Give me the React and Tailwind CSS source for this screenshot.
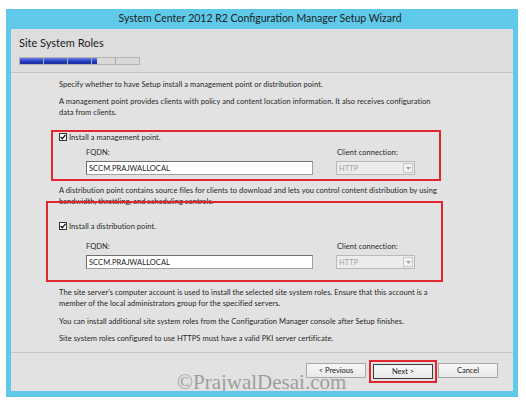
import React from 'react';

const FONT = { fontFamily: 'Lato, "Noto Sans", sans-serif' };

function Check() {
  return (
    <span className="w-[8px] h-[8px] bg-white border border-[#333] flex items-center justify-center shrink-0">
      <svg width="6" height="6" viewBox="0 0 6 6">
        <path d="M0.6 3 L2.3 4.8 L5.4 0.8" fill="none" stroke="#111" strokeWidth="1.3" />
      </svg>
    </span>
  );
}

function TextInput({ value }) {
  return (
    <div className="w-[227px] h-[14px] bg-white border border-[#a0a0a0] border-t-[#6f6f6f] border-l-[#6f6f6f] flex items-center pl-[2px] text-[7.5px] text-[#222]">
      {value}
    </div>
  );
}

function DisabledSelect() {
  return (
    <div className="w-[79px] h-[14px] bg-[#ececec] border border-[#b9b9b9] flex items-center pl-[2px] text-[7.5px] text-[#a3a3a3]">
      <span className="flex-1">HTTP</span>
      <span className="w-[10px] h-[10px] mr-[1px] border border-[#c8c8c8] bg-[#f2f2f2] flex items-center justify-center">
        <svg width="5" height="3" viewBox="0 0 5 3"><path d="M0 0 L5 0 L2.5 3 Z" fill="#a8a8a8" /></svg>
      </span>
    </div>
  );
}

function RoleFields() {
  return (
    <div className="flex">
      <div className="flex flex-col">
        <div className="h-[11px] leading-[11px] text-[7.5px]">FQDN:</div>
        <div className="mt-[3px]"><TextInput value="SCCM.PRAJWALLOCAL" /></div>
      </div>
      <div className="flex flex-col ml-[23px]">
        <div className="h-[11px] leading-[11px] text-[7.5px] pl-[1px]">Client connection:</div>
        <div className="mt-[3px]"><DisabledSelect /></div>
      </div>
    </div>
  );
}

function Btn({ children, focused }) {
  return (
    <div
      className={`w-[60px] h-[15px] flex items-center justify-center text-[7.5px] text-[#222] bg-gradient-to-b from-[#f7f7f7] to-[#e9e9e9] border ${
        focused ? 'border-[#3c3c3c]' : 'border-[#a9a9a9]'
      }`}
    >
      {children}
    </div>
  );
}

export default function App() {
  const segs = ['w-full', 'w-full', 'w-full', 'w-[5px]', 'w-0'];
  return (
    <div className="w-[526px] h-[402px] bg-white pt-[9px] pl-[6px]" style={FONT}>
      <div className="w-[512px] h-[388px] bg-[#5ec9e9] flex flex-col px-[5px] pb-[6px]">
        {/* title bar */}
        <div className="h-[20px] flex items-center justify-center text-[10.5px] text-[#1e1e1e] pr-[4px]">
          System Center 2012 R2 Configuration Manager Setup Wizard
        </div>

        <div className="flex-1 flex flex-col bg-[#e2e2e2] text-[#262626] relative overflow-hidden">
          {/* header */}
          <div className="h-[44px] bg-[#dddddd] border-b border-[#c4c4c4] pl-[8px] pt-[7px]">
            <div className="text-[11px] leading-[14px] text-[#1a1a1a]">Site System Roles</div>
            <div className="mt-[7px] w-[121px] h-[8px] border border-[#b3b3b3] bg-[#d8d8d8] flex">
              {segs.map((w, i) => (
                <div key={i} className={`flex-1 h-full ${i < 4 ? 'border-r border-[#a9a9a9]' : ''}`}>
                  <div className={`${w} h-full bg-gradient-to-b from-[#6d7fe6] via-[#2a3fc4] to-[#1a2a9a]`} />
                </div>
              ))}
            </div>
          </div>

          {/* content */}
          <div className="flex-1 flex flex-col pt-[6px] text-[7.5px] leading-[11px] whitespace-nowrap tracking-[0.05px]">
            <div className="pl-[48px]">Specify whether to have Setup install a management point or distribution point.</div>
            <div className="pl-[48px] mt-[6px]">
              <div>A management point provides clients with policy and content location information. It also receives configuration</div>
              <div>data from clients.</div>
            </div>

            <div className="ml-[40px] mt-[12px] w-[390px] border-2 border-[#e1262d] pl-[6px] pb-[4px]">
              <div className="h-[10px] flex items-center gap-[2px]">
                <Check />
                <span>Install a management point.</span>
              </div>
              <div className="mt-[5px] pl-[27px]"><RoleFields /></div>
            </div>

            <div className="pl-[48px] mt-[4px]">
              <div>A distribution point contains source files for clients to download and lets you control content distribution by using</div>
              <div>bandwidth, throttling, and scheduling controls.</div>
            </div>

            <div className="ml-[35px] -mt-[6px] w-[397px] border-2 border-[#e1262d] pl-[11px] pt-[18px] pb-[11px]">
              <div className="h-[10px] flex items-center gap-[2px]">
                <Check />
                <span>Install a distribution point.</span>
              </div>
              <div className="mt-[10px] pl-[27px]"><RoleFields /></div>
            </div>

            <div className="pl-[48px] mt-[5px]">
              <div>The site server's computer account is used to install the selected site system roles. Ensure that this account is a</div>
              <div>member of the local administrators group for the specified servers.</div>
            </div>
            <div className="pl-[48px] mt-[7px]">You can install additional site system roles from the Configuration Manager console after Setup finishes.</div>
            <div className="pl-[48px] mt-[6px]">Site system roles configured to use HTTPS must have a valid PKI server certificate.</div>
          </div>

          {/* footer */}
          <div className="h-[39px] border-t border-[#c6c6c6] flex justify-end items-start pt-[7px] pr-[15px]">
            <div className="mt-[3px]"><Btn>&lt; Previous</Btn></div>
            <div className="ml-[3px] border-2 border-[#e1262d] p-[2px]"><Btn focused>Next &gt;</Btn></div>
            <div className="ml-[1px] mt-[3px]"><Btn>Cancel</Btn></div>
          </div>

          {/* watermark */}
          <div
            className="absolute left-[166px] bottom-[-3px] text-[21px] leading-[24px] text-[#8e8e8e] opacity-80 pointer-events-none"
            style={{ fontFamily: '"Liberation Serif", serif' }}
          >
            ©PrajwalDesai.com
          </div>
        </div>
      </div>
    </div>
  );
}
